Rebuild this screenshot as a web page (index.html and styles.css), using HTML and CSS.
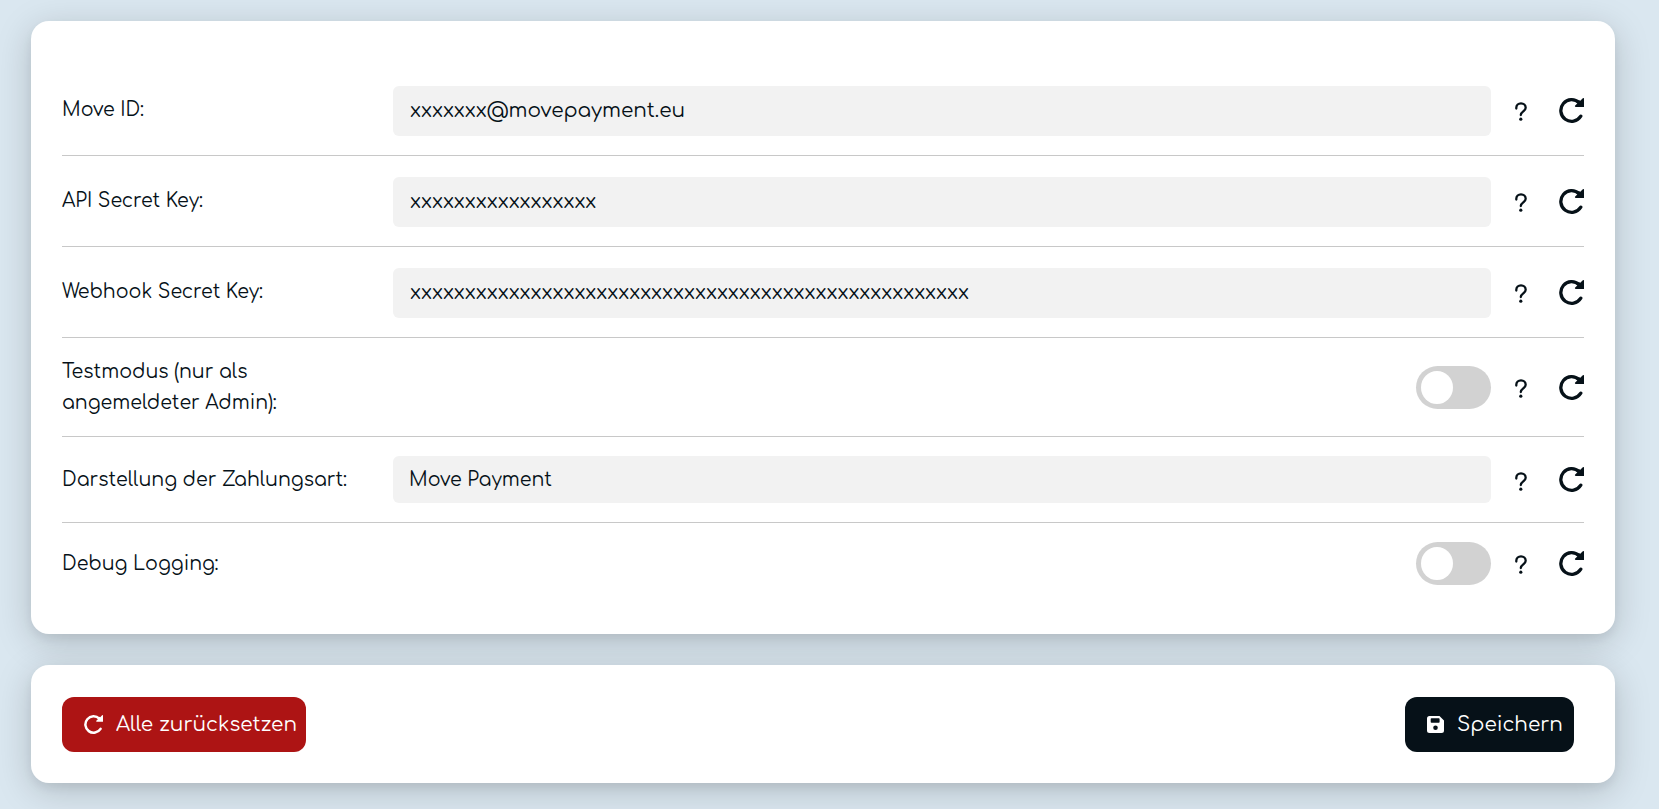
FILE: index.html
```html
<!DOCTYPE html>
<html lang="de">
<head>
<meta charset="utf-8">
<meta name="viewport" content="width=device-width, initial-scale=1">
<title>Move Payment</title>
<link rel="stylesheet" href="styles.css">
</head>
<body>
<svg class="sprite" aria-hidden="true">
  <symbol id="reset" viewBox="0 0 25 25">
    <path d="M21.800 18.200A10.800 10.800 0 1 1 20.200 4.800" fill="none" stroke="currentColor" stroke-width="3.300" stroke-linecap="round"/>
    <path d="M25 .2V9H17Q15.300 8.600 16.200 7.500L18.500 5.300 17.500 4 20 2.300 21.300 2.800 23.500.5Q24.200-.1 25 .2Z" fill="currentColor"/>
  </symbol>
  <symbol id="help" viewBox="0 0 12 19">
    <path d="M1.300 6.500V5.800A4.700 4.500 0 0 1 10.700 5.800C10.700 9.300 5.800 9.500 5.800 13" fill="none" stroke="currentColor" stroke-width="2.300" stroke-linecap="round"/>
    <circle cx="5.800" cy="17.200" r="1.600" fill="currentColor"/>
  </symbol>
  <symbol id="save" viewBox="0 0 17 17">
    <path fill="currentColor" fill-rule="evenodd" d="M2.500 0H12.500L17 4.500V14.500A2.500 2.500 0 0 1 14.500 17H2.500A2.500 2.500 0 0 1 0 14.500V2.500A2.500 2.500 0 0 1 2.500 0ZM4.500 2.200Q3.700 2.200 3.700 3V6Q3.700 6.800 4.500 6.800H11.800Q12.600 6.800 12.600 6V3Q12.600 2.200 11.800 2.200ZM8.500 9.500A2.300 2.300 0 1 0 8.500 14.100A2.300 2.300 0 1 0 8.500 9.500Z"/>
  </symbol>
</svg>
<form class="page">
  <section class="card settings">
    <div class="row text-row">
      <label class="label" for="move-id">Move ID:</label>
      <input class="field" id="move-id" type="text" value="xxxxxxx@movepayment.eu">
      <div class="tools">
        <button class="tool" type="button" aria-label="Hilfe"><svg class="help"><use href="#help"/></svg></button>
        <button class="tool" type="button" aria-label="Zurücksetzen"><svg class="reset"><use href="#reset"/></svg></button>
      </div>
    </div>
    <div class="row text-row">
      <label class="label" for="api-key">API Secret Key:</label>
      <input class="field" id="api-key" type="text" value="xxxxxxxxxxxxxxxxx">
      <div class="tools">
        <button class="tool" type="button" aria-label="Hilfe"><svg class="help"><use href="#help"/></svg></button>
        <button class="tool" type="button" aria-label="Zurücksetzen"><svg class="reset"><use href="#reset"/></svg></button>
      </div>
    </div>
    <div class="row text-row">
      <label class="label" for="webhook-key">Webhook Secret Key:</label>
      <input class="field" id="webhook-key" type="text" value="xxxxxxxxxxxxxxxxxxxxxxxxxxxxxxxxxxxxxxxxxxxxxxxxxxx">
      <div class="tools">
        <button class="tool" type="button" aria-label="Hilfe"><svg class="help"><use href="#help"/></svg></button>
        <button class="tool" type="button" aria-label="Zurücksetzen"><svg class="reset"><use href="#reset"/></svg></button>
      </div>
    </div>
    <div class="row">
      <label class="label" for="test-mode">Testmodus (nur als angemeldeter Admin):</label>
      <input class="switch" id="test-mode" type="checkbox" role="switch">
      <div class="tools">
        <button class="tool" type="button" aria-label="Hilfe"><svg class="help"><use href="#help"/></svg></button>
        <button class="tool" type="button" aria-label="Zurücksetzen"><svg class="reset"><use href="#reset"/></svg></button>
      </div>
    </div>
    <div class="row">
      <label class="label" for="display">Darstellung der Zahlungsart:</label>
      <select class="field select" id="display"><option>Move Payment</option></select>
      <div class="tools">
        <button class="tool" type="button" aria-label="Hilfe"><svg class="help"><use href="#help"/></svg></button>
        <button class="tool" type="button" aria-label="Zurücksetzen"><svg class="reset"><use href="#reset"/></svg></button>
      </div>
    </div>
    <div class="row">
      <label class="label" for="debug">Debug Logging:</label>
      <input class="switch" id="debug" type="checkbox" role="switch">
      <div class="tools">
        <button class="tool" type="button" aria-label="Hilfe"><svg class="help"><use href="#help"/></svg></button>
        <button class="tool" type="button" aria-label="Zurücksetzen"><svg class="reset"><use href="#reset"/></svg></button>
      </div>
    </div>
  </section>
  <section class="card actions">
    <button class="button danger" type="reset"><svg class="icon"><use href="#reset"/></svg>Alle zurücksetzen</button>
    <button class="button primary" type="submit"><svg class="icon disk"><use href="#save"/></svg>Speichern</button>
  </section>
</form>
</body>
</html>
```
FILE: styles.css
```css
* {
  box-sizing: border-box;
}

body {
  margin: 0;
  min-height: 100vh;
  background: #dae7f0;
  color: #061118;
  font-family: Comfortaa, Lato, "Open Sans", sans-serif;
  font-size: 19px;
  line-height: 31px;
}

.sprite {
  position: absolute;
  width: 0;
  height: 0;
}

.page {
  display: flex;
  flex-direction: column;
  gap: 31px;
  padding: 21px 44px 26px 31px;
}

.card {
  border-radius: 18px;
  background: #fff;
  box-shadow: 0 5px 10px rgba(0, 0, 0, 0.06), 0 8px 36px rgba(0, 0, 0, 0.18);
}

.settings {
  padding: 44px 31px 31px;
}

.row {
  display: grid;
  grid-template-columns: 331px minmax(0, 1fr) 93px;
  align-items: center;
  min-height: 80px;
  padding: 18px 0;
}

.row:not(:last-child) {
  border-bottom: 1px solid #c8c8c8;
}

.label {
  padding-right: 31px;
}

.text-row .label {
  padding-bottom: 2px;
}

.field {
  width: 100%;
  height: 50px;
  margin: 3px 0 1px;
  padding: 0 17px 2px;
  border: 0;
  border-radius: 6px;
  background: #f2f2f2;
  color: inherit;
  font-family: inherit;
  font-size: 20px;
}

.select {
  height: 47px;
  margin: 1px 0;
  padding: 0 16px;
  appearance: none;
  font-size: 19px;
}

.switch {
  display: flex;
  align-items: center;
  justify-self: end;
  width: 75px;
  height: 43px;
  margin: 0;
  padding: 5px;
  border-radius: 22px;
  background: #d2d2d2;
  appearance: none;
}

.switch::before {
  content: "";
  width: 32px;
  height: 33px;
  border-radius: 50%;
  background: #fff;
}

.switch:checked {
  justify-content: flex-end;
}

.tools {
  display: flex;
  justify-content: flex-end;
  gap: 26px;
}

.tool {
  display: flex;
  align-items: center;
  justify-content: center;
  width: 25px;
  height: 25px;
  padding: 0;
  border: 0;
  background: none;
  color: inherit;
}

.reset {
  width: 25px;
  height: 25px;
}

.help {
  width: 12px;
  height: 19px;
  margin-top: 3px;
}

.actions {
  display: flex;
  align-items: center;
  justify-content: space-between;
  padding: 32px 41px 31px 31px;
}

.button {
  display: flex;
  align-items: center;
  gap: 13px;
  height: 55px;
  padding: 0 9px 0 22px;
  border: 0;
  border-radius: 12px;
  color: #fff;
  font-family: inherit;
  font-size: 20px;
}

.danger {
  min-width: 244px;
  background: #ad1414;
}

.primary {
  min-width: 169px;
  background: #061118;
}

.icon {
  width: 19px;
  height: 19px;
}

.disk {
  width: 17px;
  height: 17px;
}
```
